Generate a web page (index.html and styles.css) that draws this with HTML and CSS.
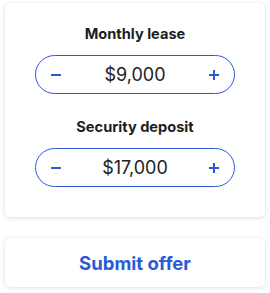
FILE: index.html
```html
<!DOCTYPE html>
<html>
<head>
  <title>Offer</title>
  <link rel="stylesheet" href="styles.css">
</head>
<body>
  <div class="card offer-card">
    <div class="field">
      <div class="field-label">Monthly lease</div>
      <div class="stepper">
        <button class="step-btn" aria-label="Decrease">
          <svg width="10" height="10" viewBox="0 0 10 10"><path d="M0 5h10" stroke="currentColor" stroke-width="2"/></svg>
        </button>
        <span class="step-value">$9,000</span>
        <button class="step-btn" aria-label="Increase">
          <svg width="10" height="10" viewBox="0 0 10 10"><path d="M0 5h10M5 0v10" stroke="currentColor" stroke-width="2"/></svg>
        </button>
      </div>
    </div>
    <div class="field">
      <div class="field-label">Security deposit</div>
      <div class="stepper">
        <button class="step-btn" aria-label="Decrease">
          <svg width="10" height="10" viewBox="0 0 10 10"><path d="M0 5h10" stroke="currentColor" stroke-width="2"/></svg>
        </button>
        <span class="step-value">$17,000</span>
        <button class="step-btn" aria-label="Increase">
          <svg width="10" height="10" viewBox="0 0 10 10"><path d="M0 5h10M5 0v10" stroke="currentColor" stroke-width="2"/></svg>
        </button>
      </div>
    </div>
  </div>
  <button class="card submit-btn">Submit offer</button>
</body>
</html>
```

FILE: styles.css
```css
body {
  margin: 0;
  padding: 3px 5px;
  width: 260px;
  font-family: Inter, "Open Sans", sans-serif;
  background-color: #fff;
  color: #1e1e1e;
}
.card {
  background: #fff;
  border-radius: 6px;
  box-shadow: 0 1px 5px rgba(0,0,0,0.14);
}
.offer-card {
  display: flex;
  flex-direction: column;
  align-items: center;
  gap: 23px;
  padding: 21px 0 30px;
}
.field {
  display: flex;
  flex-direction: column;
  align-items: center;
  gap: 11px;
}
.field-label {
  font-size: 14.6px;
  font-weight: 700;
  line-height: 20px;
}
.stepper {
  box-sizing: border-box;
  width: 200px;
  height: 39px;
  display: flex;
  align-items: center;
  justify-content: space-between;
  padding: 0 8px;
  border: 1px solid #2a5bd7;
  border-radius: 20px;
}
.step-btn {
  width: 24px;
  height: 24px;
  padding: 0;
  display: flex;
  align-items: center;
  justify-content: center;
  border: none;
  background: none;
  color: #2a5bd7;
  cursor: pointer;
}
.step-value {
  font-size: 18px;
  color: #222;
}
.submit-btn {
  display: block;
  width: 260px;
  height: 49px;
  margin-top: 21px;
  border: none;
  font-family: inherit;
  font-size: 18.5px;
  font-weight: 700;
  color: #2a5bd7;
  cursor: pointer;
}
```
